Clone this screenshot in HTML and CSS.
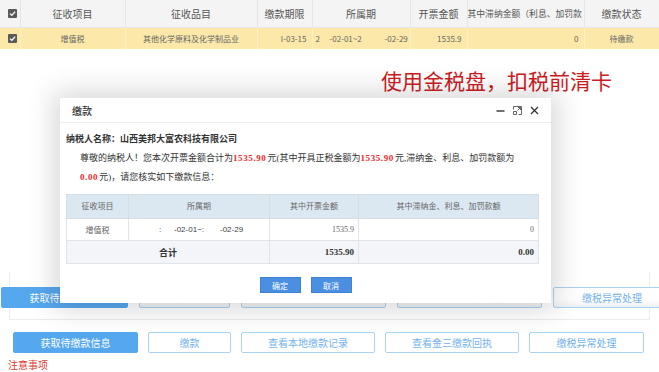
FILE: index.html
```html
<!DOCTYPE html>
<html lang="zh-CN">
<head>
    <meta charset="UTF-8">
    <meta name="viewport" content="width=device-width, initial-scale=1.0">
    <title>缴款</title>
    <link rel="stylesheet" href="styles.css">
</head>
<body>

    <!-- 待缴款列表 -->
    <table class="tax-grid">
        <colgroup>
            <col style="width:20px"><col style="width:105px"><col style="width:132px"><col style="width:55px">
            <col style="width:98px"><col style="width:57px"><col style="width:117px"><col style="width:75px">
        </colgroup>
        <thead>
            <tr>
                <th><svg class="check" width="9" height="9" viewBox="0 0 9 9"><rect width="9" height="9" rx="1" fill="#5a5a5a"/><path d="M2 4.6l1.8 1.8L7.1 2.8" stroke="#fff" stroke-width="1.3" fill="none"/></svg></th>
                <th>征收项目</th>
                <th>征收品目</th>
                <th>缴款期限</th>
                <th>所属期</th>
                <th>开票金额</th>
                <th class="clip">其中滞纳金额（利息、加罚款</th>
                <th>缴款状态</th>
            </tr>
        </thead>
        <tbody>
            <tr>
                <td><svg class="check" width="9" height="9" viewBox="0 0 9 9"><rect width="9" height="9" rx="1" fill="#5a5a5a"/><path d="M2 4.6l1.8 1.8L7.1 2.8" stroke="#fff" stroke-width="1.3" fill="none"/></svg></td>
                <td>增值税</td>
                <td>其他化学原料及化学制品业</td>
                <td class="num">I-03-15</td>
                <td class="period"><span class="yr">2</span><span class="from">-02-01~2</span><span>-02-29</span></td>
                <td class="num">1535.9</td>
                <td class="num">0</td>
                <td>待缴款</td>
            </tr>
        </tbody>
    </table>

    <div class="banner">
        <p class="notice">使用金税盘，扣税前清卡</p>
    </div>

    <!-- 被弹窗遮住的操作栏 -->
    <div class="panel">
        <div class="actions ghost">
            <button class="btn primary w-127">获取待缴款信息</button>
            <button class="btn w-91">缴款</button>
            <button class="btn w-145">查看本地缴款记录</button>
            <button class="btn w-145">查看金三缴款回执</button>
            <button class="btn w-118">缴税异常处理</button>
        </div>
    </div>

    <div class="actions main">
        <button class="btn primary w-125">获取待缴款信息</button>
        <button class="btn w-83">缴款</button>
        <button class="btn w-134">查看本地缴款记录</button>
        <button class="btn w-134">查看金三缴款回执</button>
        <button class="btn w-115">缴税异常处理</button>
    </div>

    <p class="tips">注意事项</p>

    <!-- 缴款弹窗 -->
    <div class="dialog">
        <div class="dialog-head">
            <span class="dialog-title">缴款</span>
            <div class="dialog-tools">
                <svg width="9" height="9" viewBox="0 0 9 9"><path d="M0.5 5h8" stroke="#333" stroke-width="1.4"/></svg>
                <svg width="9" height="9" viewBox="0 0 9 9" fill="none" stroke="#555" stroke-width="0.9"><path d="M0.5 3.5v-3h8v8h-3"/><path d="M0.5 5.5v3h3v-3z"/><path d="M4.5 4.5l3-3M5 1.5h2.5V4"/></svg>
                <svg width="9" height="9" viewBox="0 0 9 9"><path d="M1 1l7 7M8 1l-7 7" stroke="#333" stroke-width="1.3"/></svg>
            </div>
        </div>
        <div class="dialog-body">
            <p class="payer">纳税人名称：山西美邦大富农科技有限公司</p>
            <p class="lead">尊敬的纳税人！您本次开票金额合计为<b>1535.90</b>元(其中开具正税金额为<b>1535.90</b>元,滞纳金、利息、加罚款额为<br><b>0.00</b>元)，请您核实如下缴款信息：</p>

            <table class="pay-grid">
                <colgroup>
                    <col style="width:62px"><col style="width:141px"><col style="width:89px"><col style="width:180px">
                </colgroup>
                <thead>
                    <tr>
                        <th>征收项目</th>
                        <th>所属期</th>
                        <th>其中开票金额</th>
                        <th>其中滞纳金、利息、加罚款额</th>
                    </tr>
                </thead>
                <tbody>
                    <tr>
                        <td>增值税</td>
                        <td class="period"><span class="yr">:</span><span class="from">-02-01~:</span><span>-02-29</span></td>
                        <td class="num">1535.9</td>
                        <td class="num">0</td>
                    </tr>
                    <tr class="total">
                        <td colspan="2">合计</td>
                        <td class="num">1535.90</td>
                        <td class="num">0.00</td>
                    </tr>
                </tbody>
            </table>

            <div class="dialog-foot">
                <button class="btn-ok">确定</button>
                <button class="btn-ok">取消</button>
            </div>
        </div>
    </div>

</body>
</html>
```

FILE: styles.css
```css
/* Basic Reset */
* {
    margin: 0;
    padding: 0;
    box-sizing: border-box;
}

body {
    font-family: "Noto Sans CJK SC", "Liberation Sans", sans-serif;
    background-color: #fff;
    color: #555;
    width: 659px;
    height: 372px;
    overflow: hidden;
    position: relative;
}

/* 顶部列表 */
.tax-grid {
    width: 659px;
    border-collapse: collapse;
    table-layout: fixed;
}

.tax-grid th {
    height: 27px;
    background-color: #f4f4f4;
    font-weight: normal;
    font-size: 10px;
    color: #555;
    border-right: 1px solid #e6e6e6;
    border-bottom: 1px solid #e6e6e6;
    white-space: nowrap;
    overflow: hidden;
}

.tax-grid th.clip {
    text-align: left;
    font-size: 8.8px;
}

.tax-grid td {
    height: 22px;
    background-color: #fce9a9;
    font-size: 8px;
    color: #666;
    text-align: center;
    white-space: nowrap;
    overflow: hidden;
    border-right: 1px solid #fbf0c8;
}

.tax-grid .num {
    text-align: right;
    padding-right: 5px;
}

.check {
    display: block;
    margin-left: 8px;
}

.period {
    text-align: left !important;
}

.tax-grid .period {
    padding-left: 3px;
}

.tax-grid .period .yr {
    display: inline-block;
    width: 14px;
}

.tax-grid .period .from {
    display: inline-block;
    width: 55px;
}

/* 红色提示 */
.banner {
    height: 223px;
    padding-top: 17px;
    padding-right: 47px;
    text-align: right;
}

.notice {
    font-size: 21px;
    line-height: 28px;
    color: #cc1b22;
}

/* 按钮栏 */
.panel {
    margin: 0 9px;
    height: 48px;
    border: 1px solid #ececec;
    border-top: none;
}

.actions {
    display: flex;
    gap: 10px;
}

.actions.ghost {
    margin-left: -9px;
    padding-top: 15px;
    gap: 11px;
}

.actions.ghost .btn {
    background-image: linear-gradient(#fff 60%, #eef0f2);
}

.actions.ghost .btn.primary {
    background-image: none;
}

.actions.main {
    margin-top: 12px;
    padding-left: 13px;
}

.btn {
    height: 21px;
    border: 1px solid #a9d3f5;
    border-radius: 2px;
    background-color: #fff;
    color: #72b2eb;
    font-family: inherit;
    font-size: 10px;
    flex-shrink: 0;
}

.btn.primary {
    background-color: #55a8ee;
    border-color: #55a8ee;
    color: #fff;
}

.w-83 { width: 83px; }
.w-91 { width: 91px; }
.w-115 { width: 115px; }
.w-118 { width: 118px; }
.w-125 { width: 125px; }
.w-127 { width: 127px; }
.w-134 { width: 134px; }
.w-145 { width: 145px; }

.tips {
    margin-top: 5px;
    padding-left: 8px;
    font-size: 10px;
    line-height: 13px;
    color: #e0342b;
}

/* 弹窗 */
.dialog {
    position: absolute;
    left: 60px;
    top: 98px;
    width: 491px;
    height: 205px;
    background-color: #fff;
    box-shadow: 0 0 26px 6px rgba(0, 0, 0, 0.16);
}

.dialog-head {
    height: 25px;
    display: flex;
    align-items: center;
    justify-content: space-between;
    padding: 0 12px;
    border-bottom: 1px solid #eee;
}

.dialog-title {
    font-size: 10px;
    color: #333;
    font-weight: 500;
}

.dialog-tools {
    display: flex;
    gap: 8px;
}

.dialog-tools svg {
    display: block;
}

.dialog-body {
    padding: 7px 6px 0;
    font-family: "Liberation Serif", "Noto Sans CJK SC", serif;
    font-size: 9px;
    line-height: 19px;
    color: #333;
}

.payer {
    font-weight: bold;
}

.lead {
    padding-left: 14px;
    white-space: nowrap;
}

.lead b {
    color: #f0262e;
    letter-spacing: 0.6px;
    margin-right: 1px;
}

.pay-grid {
    margin-top: 7px;
    width: 472px;
    border-collapse: collapse;
    table-layout: fixed;
    font-size: 8px;
    color: #666;
}

.pay-grid th {
    height: 24px;
    background-color: #dce8f1;
    font-weight: normal;
    border: 1px solid #d5dee7;
}

.pay-grid td {
    height: 22px;
    text-align: center;
    border: 1px solid #dfe5ec;
    white-space: nowrap;
    font-family: "Noto Sans CJK SC", "Liberation Serif", serif;
}

.pay-grid .num {
    text-align: right;
    padding-right: 4px;
    font-family: "Liberation Serif", serif;
}

.pay-grid .period {
    padding-left: 30px;
    color: #444;
    font-family: "Liberation Sans", sans-serif;
}

.pay-grid .period .yr {
    display: inline-block;
    width: 15px;
}

.pay-grid .period .from {
    display: inline-block;
    width: 46px;
}

.pay-grid .total td {
    height: 23px;
    background-color: #f3f5f8;
    font-weight: bold;
    font-size: 9px;
    color: #333;
}

.dialog-foot {
    display: flex;
    justify-content: center;
    gap: 10px;
    margin-top: 13px;
}

.btn-ok {
    width: 41px;
    height: 16px;
    background-color: #4a8fe2;
    border: 1px solid #3f82d4;
    color: #fff;
    font-family: "Noto Sans CJK SC", sans-serif;
    font-size: 8px;
}
```
